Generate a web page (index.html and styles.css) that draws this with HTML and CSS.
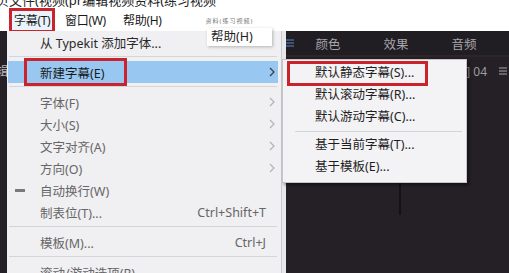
FILE: index.html
```html
<!DOCTYPE html>
<html lang="zh-CN">
<head>
  <meta charset="UTF-8" />
  <title>字幕菜单</title>
  <link rel="stylesheet" href="styles.css">
</head>
<body>

  <!-- window title, cut off at the top -->
  <div class="doc-title"><span>贝文件(视频(pr编辑视频资料(练习视频</span></div>

  <!-- menu bar -->
  <div class="menubar">
    <span class="menu-item marked">字幕(T)</span>
    <span class="menu-item">窗口(W)</span>
    <span class="menu-item">帮助(H)</span>
    <span class="ghost">资料(练习视频)</span>
  </div>

  <!-- dark app workspace behind the menu -->
  <div class="workspace">
    <div class="side"><span>辑</span></div>
    <div class="panel">
      <div class="tabs">
        <svg class="burger blue" viewBox="0 0 8 8" width="8" height="8"><path d="M0 1h8M0 4h8M0 7h8" stroke="currentColor" stroke-width="1.2"/></svg>
        <span class="tab">颜色</span>
        <span class="tab">效果</span>
        <span class="tab">音频</span>
      </div>
      <div class="panel-head">
        <span>] 04</span>
        <svg class="burger" viewBox="0 0 8 8" width="8" height="8"><path d="M0 1h8M0 4h8M0 7h8" stroke="currentColor" stroke-width="1.2"/></svg>
      </div>
      <div class="timeline"><div class="playhead"></div></div>
    </div>
  </div>

  <!-- tooltip of the help menu -->
  <div class="tooltip">帮助(H)</div>

  <!-- 字幕 dropdown -->
  <div class="dropdown">
    <div class="item"><span></span><span class="label">从 Typekit 添加字体...</span></div>
    <div class="sep"></div>
    <div class="item hover">
      <span></span><span class="label">新建字幕(E)</span><span></span>
      <svg class="chev" viewBox="0 0 6 10" width="6" height="10"><path d="M1 1l4 4-4 4" fill="none" stroke="currentColor" stroke-width="1.2"/></svg>
    </div>
    <div class="sep"></div>
    <div class="item off">
      <span></span><span class="label">字体(F)</span><span></span>
      <svg class="chev" viewBox="0 0 6 10" width="6" height="10"><path d="M1 1l4 4-4 4" fill="none" stroke="currentColor" stroke-width="1.2"/></svg>
    </div>
    <div class="item off">
      <span></span><span class="label">大小(S)</span><span></span>
      <svg class="chev" viewBox="0 0 6 10" width="6" height="10"><path d="M1 1l4 4-4 4" fill="none" stroke="currentColor" stroke-width="1.2"/></svg>
    </div>
    <div class="item off">
      <span></span><span class="label">文字对齐(A)</span><span></span>
      <svg class="chev" viewBox="0 0 6 10" width="6" height="10"><path d="M1 1l4 4-4 4" fill="none" stroke="currentColor" stroke-width="1.2"/></svg>
    </div>
    <div class="item off">
      <span></span><span class="label">方向(O)</span><span></span>
      <svg class="chev" viewBox="0 0 6 10" width="6" height="10"><path d="M1 1l4 4-4 4" fill="none" stroke="currentColor" stroke-width="1.2"/></svg>
    </div>
    <div class="item off"><span class="check"></span><span class="label">自动换行(W)</span></div>
    <div class="item off"><span></span><span class="label">制表位(T)...</span><span class="keys">Ctrl+Shift+T</span></div>
    <div class="sep"></div>
    <div class="item off"><span></span><span class="label">模板(M)...</span><span class="keys">Ctrl+J</span></div>
    <div class="sep"></div>
    <div class="item off"><span></span><span class="label">滚动/游动选项(R)...</span></div>

    <div class="note note-new"></div>
  </div>

  <!-- 新建字幕 submenu -->
  <div class="submenu">
    <div class="sub-item">默认静态字幕(S)...</div>
    <div class="sub-item">默认滚动字幕(R)...</div>
    <div class="sub-item">默认游动字幕(C)...</div>
    <div class="sep"></div>
    <div class="sub-item">基于当前字幕(T)...</div>
    <div class="sub-item">基于模板(E)...</div>

    <div class="note note-static"></div>
  </div>

</body>
</html>
```

FILE: styles.css
```css
* {
  box-sizing: border-box;
}

body {
  margin: 0;
  width: 509px;
  height: 273px;
  overflow: hidden;
  position: relative;
  background: #fff;
  font-family: "Noto Sans", "Noto Sans CJK SC", sans-serif;
  font-size: 12.5px;
  color: #1e1e1e;
}

.doc-title {
  height: 8px;
  overflow: hidden;
  white-space: nowrap;
}

.doc-title span {
  display: block;
  margin: -7px 0 0 -4px;
  line-height: 14px;
  font-size: 13px;
  color: #222;
}

.menubar {
  height: 23px;
  display: flex;
  align-items: flex-start;
  padding: 3px 0 0 12px;
  white-space: nowrap;
}

.menu-item {
  flex: none;
  padding: 0 2px;
  line-height: 19px;
  font-size: 12px;
  letter-spacing: -0.3px;
  color: #1a1a1a;
}

.menu-item:nth-child(1) {
  width: 40px;
  margin-right: 11px;
}

.menu-item:nth-child(2) {
  width: 47px;
  margin-right: 11px;
}

.menu-item.marked {
  outline: 3px solid #c9232b;
  background: #eaf2fb;
}

.ghost {
  margin: 7px 0 0 42px;
  font-size: 6px;
  line-height: 7px;
  letter-spacing: 1px;
  color: #777;
}

.workspace {
  height: 242px;
  background: #242026;
  display: grid;
  grid-template-columns: 283px 1fr;
}

.side {
  padding-top: 30px;
  overflow: hidden;
  color: #b8b6bb;
}

.side span {
  display: block;
  margin-left: -4px;
}

.panel {
  display: flex;
  flex-direction: column;
}

.tabs {
  height: 26px;
  display: flex;
  align-items: center;
  padding-left: 3px;
  background: #211e23;
  border-bottom: 2px solid #2e2528;
}

.burger {
  display: block;
  color: #a8a6ab;
}

.burger.blue {
  color: #5c82c4;
}

.tab {
  width: 68px;
  text-align: center;
  font-size: 12.5px;
  color: #a7a5aa;
}

.panel-head {
  height: 28px;
  display: flex;
  align-items: center;
  justify-content: flex-end;
  gap: 12px;
  padding-right: 2px;
  font-size: 12px;
  color: #9d9ba0;
}

.timeline {
  flex: 1;
  padding: 98px 0 0 116px;
}

.playhead {
  width: 2px;
  height: 32px;
  background: #141216;
}

.tooltip {
  position: absolute;
  left: 207px;
  top: 28px;
  width: 65px;
  height: 18px;
  padding-left: 4px;
  line-height: 18px;
  background: #fff;
  box-shadow: 1px 1px 3px rgba(0, 0, 0, 0.25);
  z-index: 3;
}

.dropdown {
  position: absolute;
  left: 7px;
  top: 31px;
  width: 275px;
  height: 250px;
  background: #f0eff2;
  border-right: 1px solid #c9c8cc;
  box-shadow: 4px 0 0 #e8e7ea;
  z-index: 1;
}

.item {
  height: 22px;
  margin: 0 3px 0 1px;
  display: grid;
  grid-template-columns: 32px 1fr auto 12px;
  align-items: center;
  white-space: nowrap;
  color: #666;
}

.item:first-child {
  color: #2a2a2a;
}

.item.hover {
  background: #98c8f2;
  color: #1a1a1a;
}

.keys {
  text-align: right;
}

.chev {
  justify-self: center;
  color: #b3b3b5;
}

.hover .chev {
  color: #3a3a3a;
}

.check {
  width: 10px;
  height: 3px;
  margin-left: 7px;
  background: #7a7a7c;
}

.sep {
  height: 8px;
  margin: 0 4px 0 2px;
  position: relative;
}

.sep::after {
  content: "";
  position: absolute;
  left: 0;
  right: 0;
  top: 3px;
  height: 1px;
  background: #d5d4d8;
}

.submenu {
  position: absolute;
  left: 282px;
  top: 59px;
  width: 185px;
  height: 124px;
  padding-top: 2px;
  background: #f3f2f5;
  border: 1px solid #c6c5c9;
  box-shadow: 2px 2px 3px rgba(0, 0, 0, 0.45);
  z-index: 2;
}

.sub-item {
  height: 22px;
  line-height: 22px;
  padding-left: 32px;
  white-space: nowrap;
  color: #1e1e1e;
}

.submenu .sep {
  height: 6px;
  margin: 0 4px 0 12px;
}

/* red annotation frames */
.note {
  position: absolute;
  border: 3px solid #c9232b;
}

.note-new {
  left: 17px;
  top: 27px;
  width: 103px;
  height: 28px;
}

.note-static {
  left: 4px;
  top: 1px;
  width: 141px;
  height: 25px;
}
```
